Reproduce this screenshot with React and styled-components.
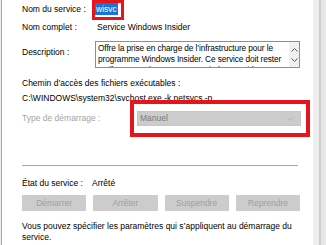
import React from 'react';
import styled, { createGlobalStyle } from 'styled-components';

const Global = createGlobalStyle`
  html, body { margin: 0; padding: 0; background: #e6e6e6; }
  body {
    font-family: "Liberation Sans", Arial, sans-serif;
    font-size: 8.5px;
    line-height: 11px;
    color: #000;
  }
`;

const Page = styled.div`
  display: flex;
  width: 326px;
  height: 245px;
  overflow: hidden;
`;

const LeftEdge = styled.div`
  width: 1px;
  flex: none;
  background: #ececec;
  border-right: 1px solid #a8a8a8;
`;

const Panel = styled.div`
  width: 311px;
  flex: none;
  box-sizing: border-box;
  background: #fff;
  padding-left: 20px;
  display: flex;
  flex-direction: column;
`;

const FrameBand = styled.div`
  width: ${(p) => p.$w}px;
  flex: none;
  background: ${(p) => p.$c};
`;

const Row = styled.div`
  display: flex;
  align-items: ${(p) => p.$align || 'flex-start'};
  margin-top: ${(p) => p.$mt || 0}px;
  height: ${(p) => (p.$h ? `${p.$h}px` : 'auto')};
`;

const Label = styled.div`
  width: ${(p) => p.$w || 75}px;
  flex: none;
  margin-top: ${(p) => p.$mt || 0}px;
  color: ${(p) => (p.$muted ? '#a3a3a3' : '#000')};
  white-space: nowrap;
`;

const Value = styled.div`
  white-space: nowrap;
`;

const MarkBox = styled.div`
  margin-left: -5px;
  border: 3px solid #e8141c;
  padding: 0 3px 2px 0;
  display: flex;
`;

const Selected = styled.span`
  background: #1a73d9;
  color: #fff;
  line-height: 12px;
  padding: 0 1px;
`;

const TextBox = styled.div`
  margin-left: -2px;
  width: 205px;
  height: 27px;
  box-sizing: border-box;
  border: 1px solid #8e8e8e;
  display: flex;
  overflow: hidden;
`;

const TextContent = styled.div`
  flex: 1;
  padding: 1px 2px;
  overflow: hidden;
  white-space: nowrap;
  font-size: 8.3px;
  letter-spacing: -0.1px;
`;

const ScrollCol = styled.div`
  width: 10px;
  flex: none;
  background: #f0f0f0;
  display: flex;
  flex-direction: column;
  align-items: center;
  padding-top: 6px;
  gap: 6px;
`;

const Block = styled.div`
  margin-top: ${(p) => p.$mt || 0}px;
  white-space: nowrap;
`;

const RedFrame = styled.div`
  width: 180px;
  box-sizing: border-box;
  border: 4px solid #e8141c;
  padding: 7px 5px 7px 3px;
`;

const Dropdown = styled.div`
  height: 15px;
  box-sizing: border-box;
  background: #cccccc;
  border: 1px solid #c6c6c6;
  display: flex;
  align-items: center;
  justify-content: space-between;
  padding: 0 6px 0 2px;
  color: #7a7a7a;
`;

const Separator = styled.div`
  margin-top: ${(p) => p.$mt || 0}px;
  width: 276px;
  height: 1px;
  background: #a9a9a9;
`;

const Buttons = styled.div`
  margin-top: ${(p) => p.$mt || 0}px;
  width: 278px;
  display: grid;
  grid-template-columns: repeat(4, 1fr);
  gap: 7px;
`;

const Button = styled.div`
  height: 16px;
  background: #cccccc;
  color: #a0a0a0;
  display: flex;
  align-items: center;
  justify-content: center;
`;

const Chevron = ({ up, color = '#5a5a5a', w = 7 }) => (
  <svg width={w} height="4" viewBox="0 0 7 4">
    <path d={up ? 'M0.5 3.5 L3.5 0.5 L6.5 3.5' : 'M0.5 0.5 L3.5 3.5 L6.5 0.5'} fill="none" stroke={color} strokeWidth="1" />
  </svg>
);

export default function App() {
  return (
    <Page>
      <Global />
      <LeftEdge />
      <Panel>
        <Row $h={20}>
          <Label $mt={3.5}>Nom du service :</Label>
          <MarkBox>
            <Selected>wisvc</Selected>
          </MarkBox>
        </Row>
        <Row $mt={2}>
          <Label>Nom complet :</Label>
          <Value>Service Windows Insider</Value>
        </Row>
        <Row $mt={8}>
          <Label $mt={5.5}>Description :</Label>
          <TextBox>
            <TextContent>
              <div>Offre la prise en charge de l’infrastructure pour le</div>
              <div>programme Windows Insider. Ce service doit rester</div>
              <div>actif pour que le programme Windows Insider</div>
            </TextContent>
            <ScrollCol>
              <Chevron up />
              <Chevron />
            </ScrollCol>
          </TextBox>
        </Row>
        <Block $mt={9.5}>Chemin d’accès des fichiers exécutables :</Block>
        <Block $mt={4}>C:\WINDOWS\system32\svchost.exe -k netsvcs -p</Block>
        <Row $mt={-3.5} $align="center">
          <Label $w={108} $muted>Type de démarrage :</Label>
          <RedFrame>
            <Dropdown>
              <span>Manuel</span>
              <Chevron color="#b0b0b0" />
            </Dropdown>
          </RedFrame>
        </Row>
        <Separator $mt={28} />
        <Row $mt={12}>
          <Label $w={70}>État du service :</Label>
          <Value>Arrêté</Value>
        </Row>
        <Buttons $mt={6}>
          <Button>Démarrer</Button>
          <Button>Arrêter</Button>
          <Button>Suspendre</Button>
          <Button>Reprendre</Button>
        </Buttons>
        <Block $mt={9.5}>
          Vous pouvez spécifier les paramètres qui s’appliquent au démarrage du
          <br />
          service.
        </Block>
      </Panel>
      <FrameBand $w={6} $c="#efefef" />
      <FrameBand $w={2} $c="#cdcdcd" />
      <FrameBand $w={7} $c="#e6e6e6" />
    </Page>
  );
}
